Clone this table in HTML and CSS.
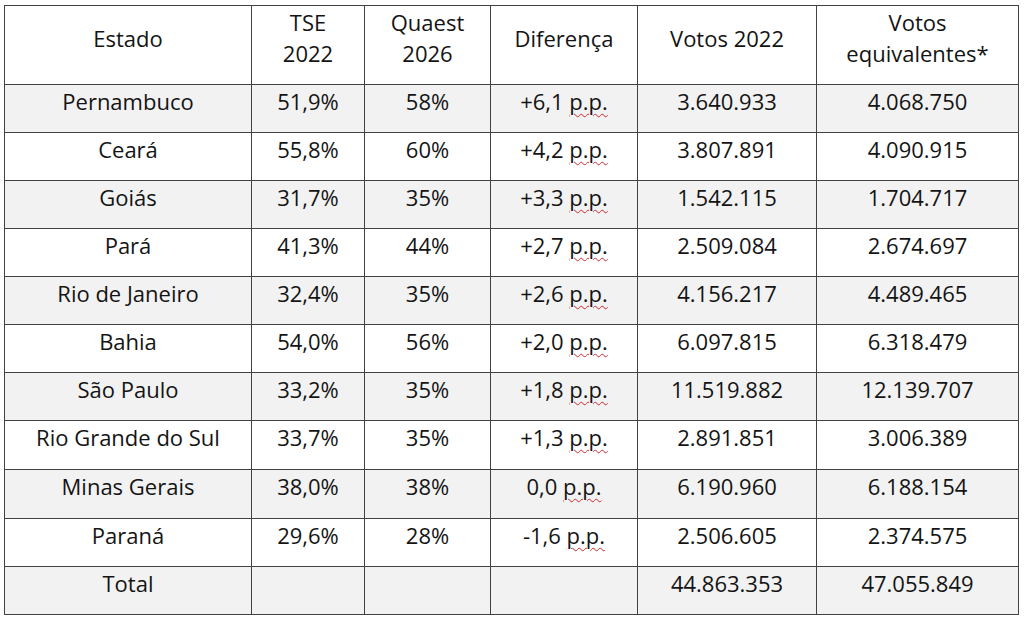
FILE: index.html
```html
<!DOCTYPE html>
<html lang="pt-BR">
<head>
<meta charset="utf-8">
<title>Votos equivalentes</title>
<link rel="stylesheet" href="styles.css">
</head>
<body>
<table class="grid">
  <colgroup>
    <col class="c-estado">
    <col class="c-tse">
    <col class="c-quaest">
    <col class="c-dif">
    <col class="c-votos">
    <col class="c-equiv">
  </colgroup>
  <thead>
    <tr>
      <th>Estado</th>
      <th>TSE<br>2022</th>
      <th>Quaest<br>2026</th>
      <th>Diferença</th>
      <th>Votos 2022</th>
      <th>Votos<br>equivalentes*</th>
    </tr>
  </thead>
  <tbody>
    <tr class="alt"><td>Pernambuco</td><td>51,9%</td><td>58%</td><td>+6,1 <span class="sp">p.p.</span></td><td>3.640.933</td><td>4.068.750</td></tr>
    <tr><td>Ceará</td><td>55,8%</td><td>60%</td><td>+4,2 <span class="sp">p.p.</span></td><td>3.807.891</td><td>4.090.915</td></tr>
    <tr class="alt"><td>Goiás</td><td>31,7%</td><td>35%</td><td>+3,3 <span class="sp">p.p.</span></td><td>1.542.115</td><td>1.704.717</td></tr>
    <tr class="dark"><td>Pará</td><td>41,3%</td><td>44%</td><td>+2,7 <span class="sp">p.p.</span></td><td>2.509.084</td><td>2.674.697</td></tr>
    <tr class="alt"><td>Rio de Janeiro</td><td>32,4%</td><td>35%</td><td>+2,6 <span class="sp">p.p.</span></td><td>4.156.217</td><td>4.489.465</td></tr>
    <tr class="dark"><td>Bahia</td><td>54,0%</td><td>56%</td><td>+2,0 <span class="sp">p.p.</span></td><td>6.097.815</td><td>6.318.479</td></tr>
    <tr class="alt"><td>São Paulo</td><td>33,2%</td><td>35%</td><td>+1,8 <span class="sp">p.p.</span></td><td>11.519.882</td><td>12.139.707</td></tr>
    <tr class="tall"><td>Rio Grande do Sul</td><td>33,7%</td><td>35%</td><td>+1,3 <span class="sp">p.p.</span></td><td>2.891.851</td><td>3.006.389</td></tr>
    <tr class="alt tall"><td>Minas Gerais</td><td>38,0%</td><td>38%</td><td>0,0 <span class="sp">p.p.</span></td><td>6.190.960</td><td>6.188.154</td></tr>
    <tr><td>Paraná</td><td>29,6%</td><td>28%</td><td>-1,6 <span class="sp">p.p.</span></td><td>2.506.605</td><td>2.374.575</td></tr>
    <tr class="alt"><td>Total</td><td></td><td></td><td></td><td>44.863.353</td><td>47.055.849</td></tr>
  </tbody>
</table>
</body>
</html>
```
FILE: styles.css
```css
html, body {
  margin: 0;
  padding: 0;
  background: #ffffff;
}

body {
  padding: 5px 0 0 4px;
  font-family: "Open Sans", "Liberation Sans", sans-serif;
  color: #141414;
}

.grid {
  border-collapse: collapse;
  table-layout: fixed;
  width: 1014px;
  font-size: 22px;
  line-height: 31px;
}

.c-estado { width: 247px; }
.c-tse { width: 113px; }
.c-quaest { width: 126px; }
.c-dif { width: 147px; }
.c-votos { width: 179px; }
.c-equiv { width: 202px; }

.grid th,
.grid td {
  border: 1px solid #424242;
  padding: 1px 4px 15px;
  text-align: center;
  vertical-align: middle;
  font-weight: 400;
  white-space: nowrap;
}

.grid tr.tall td {
  padding-bottom: 16px;
}

.grid tr.alt td {
  background: #f2f2f2;
}

.grid tr.dark td {
  border-top-color: #111111;
}

.sp {
  text-decoration: underline wavy #d02828;
  text-decoration-thickness: 1px;
  text-underline-offset: 3px;
}
```
